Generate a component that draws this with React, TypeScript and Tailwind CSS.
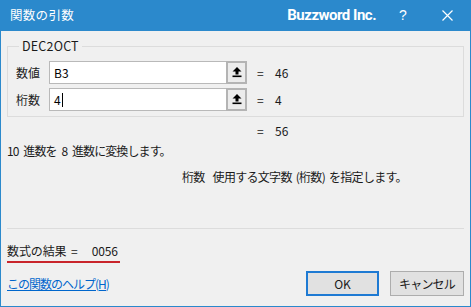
const jp = "font-['Noto_Sans_CJK_JP',sans-serif]";

const CollapseIcon = () => (
  <svg width="10" height="11" viewBox="0 0 10 11">
    <path d="M5 0 L9.5 4.5 H6.5 V7.5 H3.5 V4.5 H0.5 Z" fill="#000" />
    <rect x="0.5" y="8.5" width="9" height="1.6" fill="#000" />
  </svg>
);

const ArgRow = ({ label, value, result, caret }: { label: string; value: string; result: string; caret?: boolean }) => (
  <div className="flex items-center h-[23px]">
    <span className="w-[33px] text-[12px] text-[#1a1a1a]">{label}</span>
    <div className="flex h-full">
      <div className="w-[177px] h-full bg-white border border-[#b9b9b9] border-r-0 flex items-center pl-[4px] text-[12px] text-black">
        {value}
        {caret && <span className="inline-block w-px h-[14px] bg-black ml-px" />}
      </div>
      <div className="w-[21px] h-full border-2 border-[#b4b4b4] bg-[#ececec] flex items-center justify-center">
        <CollapseIcon />
      </div>
    </div>
    <span className="ml-[10px] w-[18px] text-[12px]">=</span>
    <span className="text-[12px]">{result}</span>
  </div>
);

export default function App() {
  return (
    <div className={`w-[471px] h-[307px] flex flex-col bg-[#2b89cc] ${jp} text-[#1a1a1a]`}>
      {/* title bar */}
      <div className="h-[31px] flex items-center text-white shrink-0">
        <span className="pl-[10px] text-[12.5px] tracking-[0.3px]">関数の引数</span>
        <span className="ml-auto font-['Roboto',sans-serif] font-bold text-[15px] tracking-[-0.5px]">Buzzword Inc.</span>
        <span className="ml-[21px] w-[12px] text-[14px] text-center font-['Liberation_Sans',sans-serif]">?</span>
        <svg className="ml-[33px] mr-[18px]" width="11" height="11" viewBox="0 0 11 11">
          <path d="M0.5 0.5 L10.5 10.5 M10.5 0.5 L0.5 10.5" stroke="#fff" strokeWidth="1.2" />
        </svg>
      </div>

      {/* body */}
      <div className="flex-1 mx-px mb-px bg-[#f0f0f0] px-[6px] flex flex-col text-[12px]">
        <fieldset className="mt-[8px] border border-[#dcdcdc] pl-[8px] pb-[5px]">
          <legend className="ml-[3px] px-[3px] text-[12.5px] leading-[14px] tracking-[0.2px]">DEC2OCT</legend>
          <div className="mt-[8px] flex flex-col gap-[4px]">
            <ArgRow label="数値" value="B3" result="46" />
            <ArgRow label="桁数" value="4" result="4" caret />
          </div>
        </fieldset>

        <div className="mt-[6px] h-[16px] flex items-center pl-[250px]">
          <span className="w-[18px]">=</span>
          <span>56</span>
        </div>

        <p className="mt-[4px] h-[16px] leading-[16px] tracking-[-0.9px] [word-spacing:3px]">10 進数を 8 進数に変換します。</p>

        <p className="mt-[10px] h-[16px] leading-[16px] pl-[175px] tracking-[-0.7px] [word-spacing:2px]">
          <span>桁数</span>
          <span className="ml-[8px]">使用する文字数 (桁数) を指定します。</span>
        </p>

        <div className="mt-[43px] h-px bg-[#dcdcdc]" />

        <div className="mt-[13px]">
          <span className="inline-block leading-[16px] border-b-2 border-[#c9252b] pb-[2px] pr-[2px] tracking-[-0.1px] [word-spacing:2px]">
            数式の結果 =<span className="ml-[14px]">0056</span>
          </span>
        </div>

        <div className="mt-[8px] flex items-center">
          <a className="text-[#0066cc] underline tracking-[-1px]" href="#">この関数のヘルプ(H)</a>
          <button className="ml-auto w-[73px] h-[25px] bg-[#e1e1e1] border-2 border-[#1e7ad3] text-[12px]">OK</button>
          <button className="ml-[11px] w-[74px] h-[25px] bg-[#e1e1e1] border border-[#adadad] text-[12px] tracking-[-0.8px]">キャンセル</button>
        </div>
      </div>
    </div>
  );
}
